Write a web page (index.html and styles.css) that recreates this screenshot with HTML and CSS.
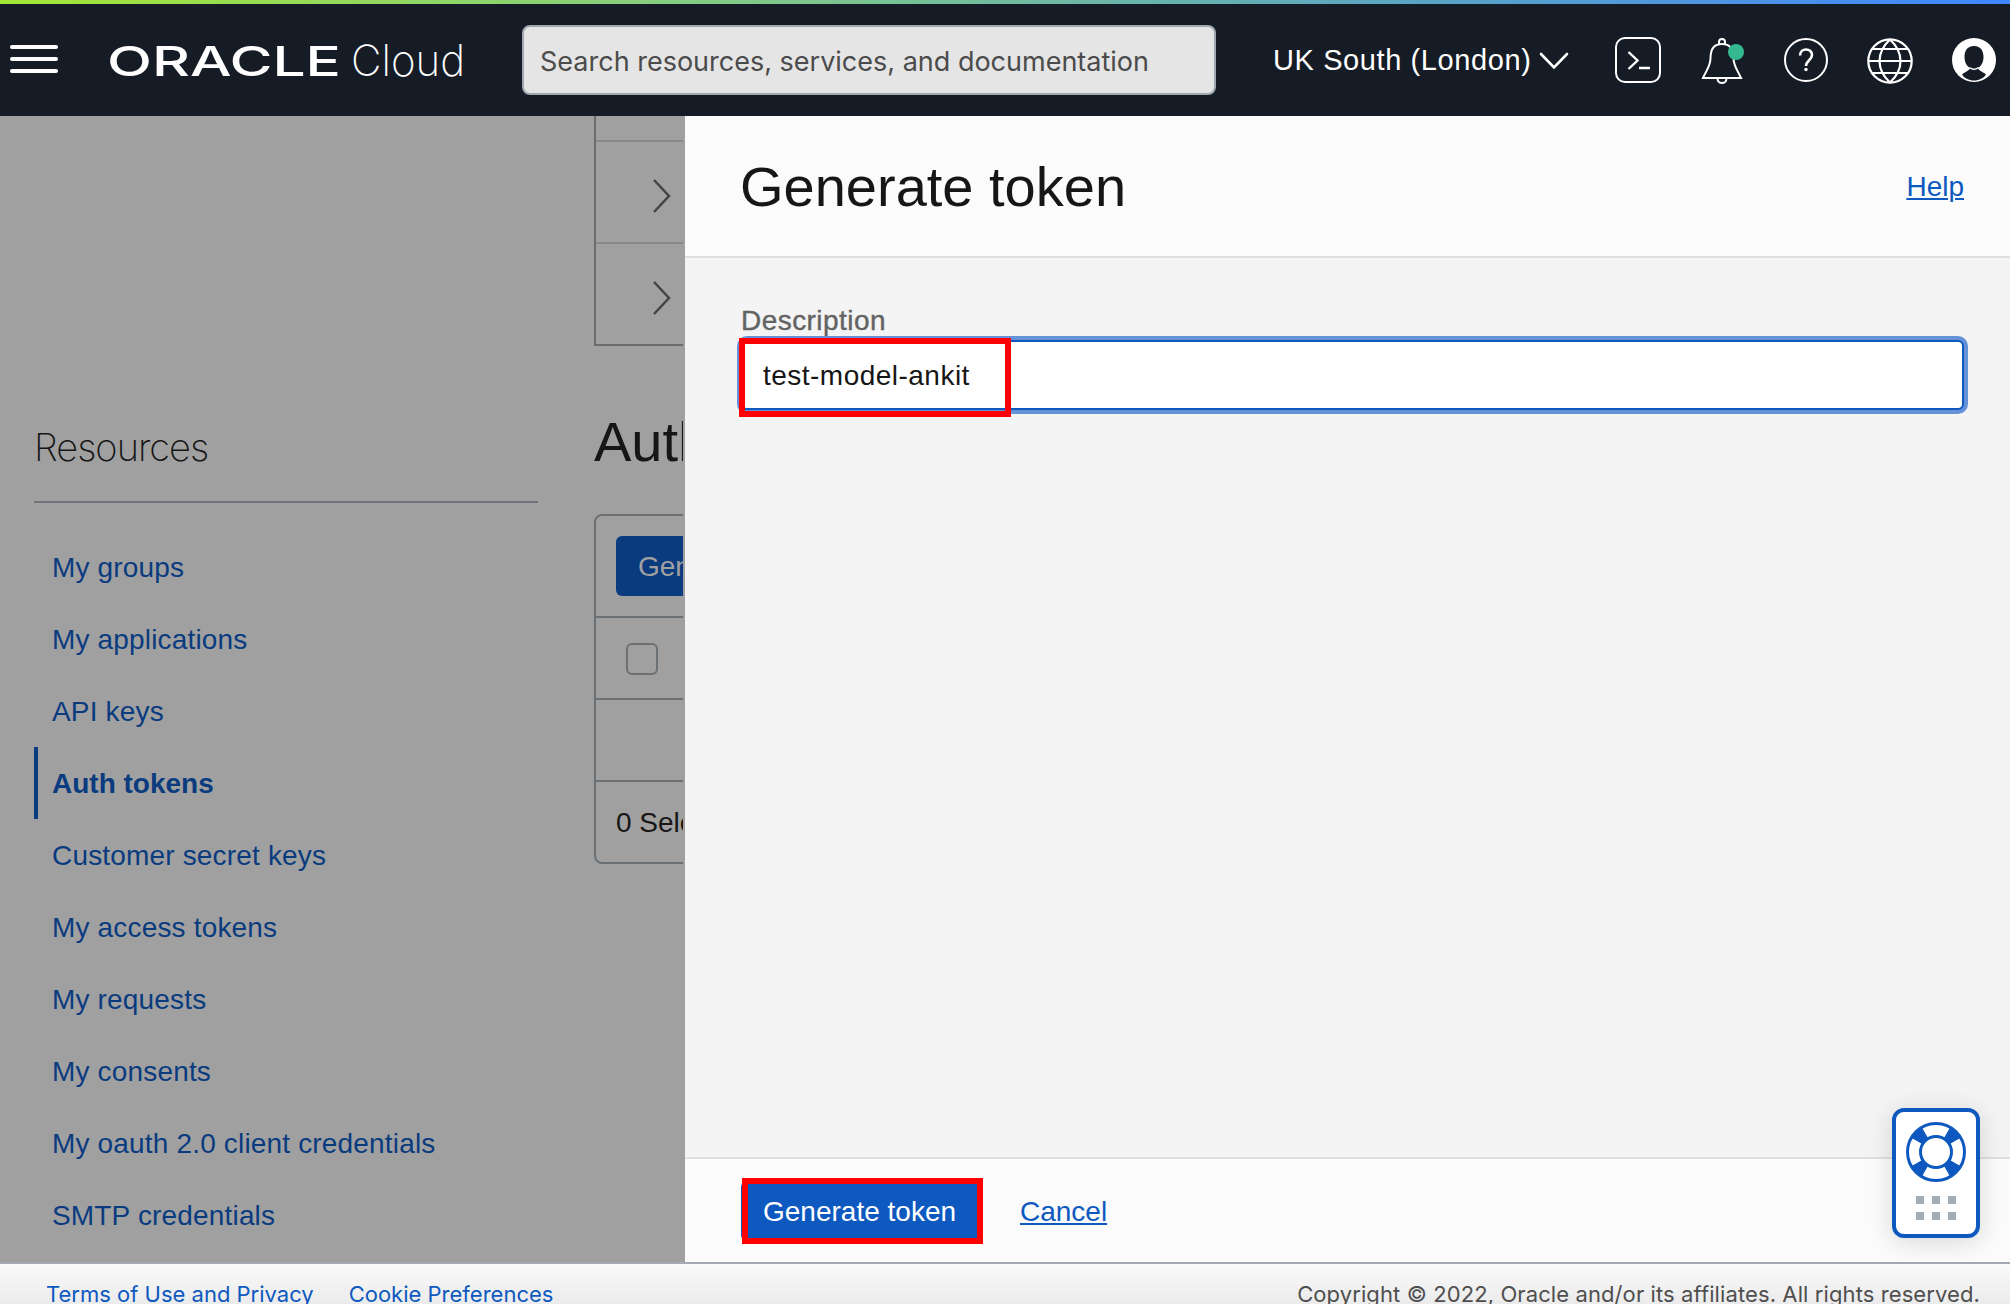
FILE: index.html
```html
<!DOCTYPE html>
<html lang="en">
<head>
<meta charset="utf-8">
<title>Auth tokens - Oracle Cloud</title>
<link rel="stylesheet" href="styles.css">
</head>
<body>
<header class="topbar">
  <div class="menu"><span></span><span></span><span></span></div>
  <svg class="logo" width="356" height="44" viewBox="0 0 356 44">
    <text class="logo-oracle" x="-2" y="38" textLength="234" lengthAdjust="spacingAndGlyphs">ORACLE</text>
    <text class="logo-cloud" x="242" y="38" textLength="114" lengthAdjust="spacingAndGlyphs">Cloud</text>
  </svg>
  <div class="search"><span class="search-text">Search resources, services, and documentation</span></div>
  <div class="region"><span class="region-name">UK South (London)</span>
    <svg width="30" height="18" viewBox="0 0 30 18"><path d="M2 2 15 15.500 28 2" fill="none" stroke="#fff" stroke-width="2.600" stroke-linecap="round"/></svg>
  </div>
  <div class="icons">
    <svg width="48" height="48" viewBox="0 0 48 48" fill="none" stroke="#fff" stroke-width="2"><rect x="2" y="2" width="44" height="44" rx="9"/><path d="M14.500 16l9 8.500-9 8.500M25 32h11" stroke-width="2.400"/></svg>
    <svg width="48" height="48" viewBox="0 0 48 48" fill="none" stroke="#fff" stroke-width="2"><path d="M21 8.500V6a3 3 0 0 1 6 0v2.500M5 42c4-9 7.500-12 7.500-20 0-8 2.500-14 11.500-14s11.500 6 11.500 14c0 8 3.500 11 7.500 20zM19.500 42.500a4.500 4.500 0 0 0 9 0"/><circle cx="38" cy="16" r="8" fill="#33b890" stroke="none"/></svg>
    <svg width="48" height="48" viewBox="0 0 48 48" fill="none" stroke="#fff" stroke-width="2"><circle cx="24" cy="24" r="21"/><path d="M18 19.500c0-8 12-8 12-.500 0 5-6 5.500-6 11" stroke-width="2.600"/><circle cx="24" cy="33.500" r="1.700" fill="#fff" stroke="none"/></svg>
    <svg width="48" height="48" viewBox="0 0 48 48" fill="none" stroke="#fff" stroke-width="2.200"><circle cx="24" cy="25" r="21.700"/><path d="M24 3.500c-14 13-14 30 0 43c14-13 14-30 0-43M2 25h44M6 13h36M6 37h36"/></svg>
    <svg width="48" height="48" viewBox="0 0 48 48"><circle cx="24" cy="24" r="22" fill="#fff"/><path d="M24 10c-7 0-9.500 5-9.500 11 0 5 2.200 9 5.500 11-.500 3-5 3.500-8 6.500C14 42 19 44.500 24 44.500S34 42 36 38.500c-3-3-7.500-3.500-8-6.500 3.300-2 5.500-6 5.500-11 0-6-2.500-11-9.500-11z" fill="#161c26"/><path d="M19.500 31.500q4.500 3.500 9 0" fill="none" stroke="#fff" stroke-width="1.500"/></svg>
  </div>
</header>
<div class="stage">
  <aside class="sidebar">
    <h2 class="side-title">Resources</h2>
    <nav class="side-nav">
      <a>My groups</a><a>My applications</a><a>API keys</a><a class="active">Auth tokens</a><a>Customer secret keys</a><a>My access tokens</a><a>My requests</a><a>My consents</a><a>My oauth 2.0 client credentials</a><a>SMTP credentials</a>
    </nav>
  </aside>
  <main class="content">
    <div class="details">
      <div class="detail-row short"></div>
      <div class="detail-row"><svg width="20" height="36" viewBox="0 0 20 36"><path d="M2 2l15 16L2 34"/></svg></div>
      <div class="detail-row last"><svg width="20" height="36" viewBox="0 0 20 36"><path d="M2 2l15 16L2 34"/></svg></div>
    </div>
    <h1 class="content-title">Auth tokens</h1>
    <div class="table">
      <div class="table-actions"><span class="dim-button">Generate token</span></div>
      <div class="table-head"><span class="checkbox"></span></div>
      <div class="table-empty"></div>
      <div class="table-foot">0 Selected</div>
    </div>
  </main>
  <section class="panel">
    <div class="panel-head"><h1>Generate token</h1><a class="link">Help</a></div>
    <div class="panel-body">
      <label class="label">Description</label>
      <div class="input"><span class="input-text">test-model-ankit</span><i class="mark mark-input"></i></div>
    </div>
    <div class="panel-foot">
      <div class="button"><span class="button-text">Generate token</span><i class="mark mark-button"></i></div>
      <a class="link cancel">Cancel</a>
    </div>
  </section>
  <div class="support">
    <svg width="60" height="60" viewBox="0 0 60 60" fill="none" stroke="#0d59c0"><circle cx="30" cy="30" r="22" stroke-width="13" pathLength="360" stroke-dasharray="30 60" stroke-dashoffset="-30"/><circle cx="30" cy="30" r="28.500" stroke-width="3"/><circle cx="30" cy="30" r="15.500" stroke-width="3"/></svg>
    <div class="grip"><i></i><i></i><i></i><i></i><i></i><i></i></div>
  </div>
</div>
<footer class="footer"><a class="terms">Terms of Use and Privacy</a><a class="cookies">Cookie Preferences</a><span class="copy">Copyright © 2022, Oracle and/or its affiliates. All rights reserved.</span></footer>
</body>
</html>
```
FILE: styles.css
```css
* { box-sizing: border-box; }
body { margin: 0; width: 2010px; height: 1304px; overflow: hidden; font: 28px/1 "Liberation Sans", Arial, sans-serif; color: #161616; }
h1, h2 { margin: 0; font-weight: 400; }
svg { display: block; flex: none; }

.topbar { height: 116px; padding: 4px 12px 0 10px; display: flex; align-items: center; background: linear-gradient(90deg, #a3e635, #84cc84 35%, #62aeb4 62%, #3f86ff) top / 100% 4px no-repeat #161c26; color: #fff; }
.menu { width: 48px; display: grid; gap: 8px; margin-top: -2px; }
.menu span { height: 4px; border-radius: 2px; background: #fff; }
.logo { margin-left: 51px; fill: #fff; overflow: visible; }
.logo-oracle { font: 500 41px Inter, sans-serif; }
.logo-cloud { font: 200 43px Inter, sans-serif; }
.search { width: 694px; height: 70px; margin-left: 57px; padding: 3px 0 0 16px; display: flex; align-items: center; border: 2px solid #a1a8b2; border-radius: 8px; background: #e5e5e5; }
.search-text { width: 611px; overflow: hidden; white-space: nowrap; font: 27px/40px Inter, sans-serif; letter-spacing: 0; color: #4b4b4b; }
.region { width: 342px; padding-left: 57px; display: flex; align-items: center; gap: 9px; white-space: nowrap; }
.region-name { width: 257px; flex: none; font-size: 29px; letter-spacing: .6px; }
.region svg { margin-top: 2px; }
.icons { flex: 1; margin-left: 56px; display: flex; justify-content: space-between; }

.stage { position: relative; height: 1146px; display: grid; grid-template-columns: 594px 89px 1325px; column-gap: 0; background: #a0a0a0; }
.sidebar { padding: 305px 56px 0 34px; }
.side-title { height: 82px; border-bottom: 2px solid #6f757a; font: 200 38px/52px Inter, sans-serif; letter-spacing: -1px; }
.side-nav { padding-top: 28px; }
.side-nav a { display: block; height: 72px; padding-left: 18px; line-height: 74px; letter-spacing: .17px; color: #0a3b7f; white-space: nowrap; }
.side-nav .active { padding-left: 14px; border-left: 4px solid #0a3b7f; font-weight: 700; letter-spacing: 0; }
.content { overflow: hidden; }
.details { width: 1300px; border-left: 2px solid #6b6b6b; }
.detail-row { height: 102px; padding: 8px 0 0 56px; display: flex; align-items: center; border-bottom: 2px solid #88888d; }
.detail-row path { fill: none; stroke: #444; stroke-width: 2.5px; }
.detail-row.short { height: 26px; }
.detail-row.last { border-color: #6b6b6b; }
.content-title { padding-top: 62px; height: 168px; font-size: 56px; line-height: 68px; white-space: nowrap; }
.table { width: 1300px; height: 350px; border: 2px solid #6b7075; border-radius: 8px; }
.table > div { padding-left: 20px; display: flex; align-items: center; border-bottom: 2px solid #6b7075; }
.table .table-actions { height: 102px; }
.table .table-head { height: 82px; padding: 2px 0 0 30px; }
.table .table-empty { height: 82px; }
.table .table-foot { height: 80px; padding-top: 2px; border: 0; white-space: nowrap; }
.dim-button { height: 60px; padding: 0 22px; border-radius: 6px; background: #0a3b7f; color: #a0a0a0; line-height: 62px; white-space: nowrap; }
.checkbox { width: 32px; height: 32px; border: 2px solid #6b7075; border-radius: 6px; }

.panel { width: 1325px; margin-left: 2px; display: flex; flex-direction: column; background: #f4f4f4; }
.panel-head { height: 142px; padding: 2px 46px 0 55px; display: flex; align-items: center; justify-content: space-between; border-bottom: 2px solid #dfdfdf; background: #fbfbfb; }
.panel-head h1 { font-size: 56px; }
.link { color: #0d59c0; text-decoration: underline; text-decoration-thickness: 2px; text-underline-offset: 2px; }
.panel-body { flex: 1; padding: 48px 46px 0 56px; }
.label { display: block; height: 34px; line-height: 30px; letter-spacing: .45px; color: #636363; -webkit-text-stroke: .4px #636363; }
.input { position: relative; height: 70px; padding: 2px 0 0 20px; display: flex; align-items: center; border: 2px solid #0d59c0; border-radius: 6px; box-shadow: 0 0 0 4px #6491d8; background: #fff; }
.input-text { letter-spacing: .48px; }
.mark { position: absolute; border: 6px solid #f00; }
.mark-input { left: -4px; top: -4px; width: 272px; height: 79px; }
.panel-foot { height: 105px; padding-left: 56px; display: flex; align-items: center; border-top: 2px solid #dfdfdf; background: #fbfbfb; }
.button { position: relative; width: 240px; height: 60px; padding-left: 22px; border-radius: 6px; background: #0d59c0; color: #fff; line-height: 62px; white-space: nowrap; }
.mark-button { left: 1px; top: -3px; width: 241px; height: 66px; }
.cancel { margin-left: 39px; padding-top: 2px; }
.support { position: absolute; left: 1892px; top: 992px; width: 88px; height: 130px; padding: 10px; border: 4px solid #0d59c0; border-radius: 12px; background: #fff; box-shadow: 0 4px 26px rgba(0,0,0,.14); }
.grip { margin: 14px 14px 0; display: grid; grid-template-columns: repeat(3, 8px); gap: 8px; justify-content: center; }
.grip i { height: 8px; background: #a5acb4; }

.footer { height: 42px; padding: 0 30px 0 46px; display: flex; align-items: flex-start; border-top: 2px solid #a5a9b4; background: linear-gradient(#fafafa, #ebebeb); font: 22px/60px Inter, sans-serif; color: #4f4f4f; white-space: nowrap; overflow: hidden; }
.footer a { color: #0d59c0; }
.cookies { margin-left: 35px; }
.copy { margin-left: auto; letter-spacing: .1px; }
```
